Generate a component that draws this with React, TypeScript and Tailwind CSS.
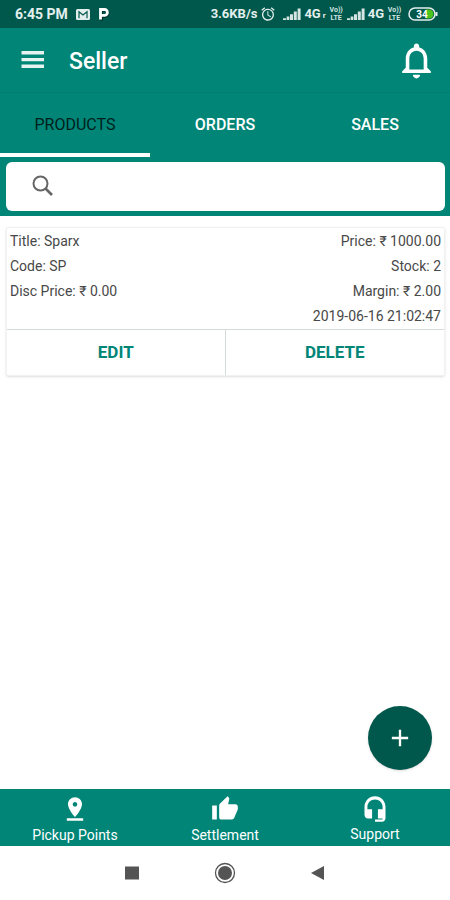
import React, { useState } from 'react';
import { MdAdd, MdAlarm, MdNotificationsNone, MdPinDrop, MdThumbUp } from 'react-icons/md';

interface Product {
  title: string;
  code: string;
  discPrice: string;
  price: string;
  stock: number;
  margin: string;
  createdAt: string;
}

const products: Product[] = [
  {
    title: 'Sparx',
    code: 'SP',
    discPrice: '0.00',
    price: '1000.00',
    stock: 2,
    margin: '2.00',
    createdAt: '2019-06-16 21:02:47',
  },
];

const tabs = ['PRODUCTS', 'ORDERS', 'SALES'];

const links = [
  { label: 'Pickup Points', icon: MdPinDrop, pad: 'pt-[6px]' },
  { label: 'Settlement', icon: MdThumbUp, pad: 'pt-[6px]' },
  { label: 'Support', icon: HeadsetIcon, pad: 'pt-[5px]' },
];

function HeadsetIcon({ className }: { className?: string }) {
  return (
    <svg className={className} viewBox="0 0 24 24" fill="currentColor">
      <path d="M12 2c-4.970 0-9 4.030-9 9v7c0 1.660 1.340 3 3 3h3.500v-8H5.500v-2c0-3.600 2.900-6.300 6.500-6.300s6.500 2.700 6.500 6.300v2h-4v8h4v.8h-6.500v2h6c1.660 0 3-1.340 3-3V11c0-4.970-4.030-9-9-9z" />
    </svg>
  );
}

function SignalBars() {
  return (
    <svg className="h-3 w-[18px] shrink-0" viewBox="0 0 18 12" fill="#d5e5e2">
      <path d="M0 10.200h3V12H0zM3.600 8.500h2.800V12H3.600zM7 6.200h3V12H7zM10.800 3.500h3V12h-3zM14.600 .5h3V12h-3z" />
    </svg>
  );
}

function VoLte() {
  return (
    <span className="flex w-[15px] shrink-0 flex-col items-center text-[7px] leading-2 text-[#d5e5e2]">
      <span>Vo))</span>
      <span>LTE</span>
    </span>
  );
}

function StatusBar() {
  return (
    <div className="flex h-7 items-center justify-between bg-[#00574b] pr-3 pl-[15px] text-[13px] font-bold text-[#e3efed]">
      <div className="flex items-center gap-2">
        <span className="text-sm">6:45 PM</span>
        <svg className="h-[11px] w-[14px]" viewBox="0 0 14 11">
          <rect width="14" height="11" rx="1.500" fill="#e3efed" />
          <path d="M3 9.200V2.800l4 3.200 4-3.200v6.400" fill="none" stroke="#00574b" strokeWidth="1.200" />
        </svg>
        <svg className="h-[14px] w-3" viewBox="0 0 12 14" fill="none">
          <path d="M3.500 13.500V3.500h3.500a2.700 2.700 0 0 1 0 5.800H3.500" stroke="#00352e" strokeWidth="3" />
          <path d="M2.500 12.500V2.500h4a2.600 2.600 0 0 1 0 5.800h-4" stroke="#fff" strokeWidth="2.800" />
        </svg>
      </div>
      <div className="flex items-center gap-[3px]">
        <span>3.6KB/s</span>
        <MdAlarm className="mr-1 size-4" />
        <SignalBars />
        <span className="flex items-baseline gap-[2px]">4G<span className="text-[8px]">r</span></span>
        <VoLte />
        <SignalBars />
        <span>4G</span>
        <VoLte />
        <svg className="ml-[3px] h-[14px] w-[30px]" viewBox="0 0 30 14">
          <rect x="1" y="1" width="26" height="12" rx="6" fill="#00574b" stroke="#e3efed" strokeWidth="1.500" />
          <path d="M18 2.500h3a4.500 4.500 0 0 1 0 9h-3z" fill="#4fc31d" />
          <path d="M28.500 5v4" stroke="#e3efed" strokeWidth="2" />
          <text x="14" y="10.500" textAnchor="middle" fontSize="10" fill="#fff">34</text>
        </svg>
      </div>
    </div>
  );
}

function ProductCard({ product }: { product: Product }) {
  return (
    <article className="rounded-xs border border-[#f1f1f1] bg-white shadow-sm">
      <div className="flex justify-between px-[3px] pt-px text-sm leading-[25px] text-[#484848]">
        <div>
          <p>Title: {product.title}</p>
          <p>Code: {product.code}</p>
          <p>Disc Price: ₹ {product.discPrice}</p>
        </div>
        <div className="text-right">
          <p>Price: ₹ {product.price}</p>
          <p>Stock: {product.stock}</p>
          <p>Margin: ₹ {product.margin}</p>
          <p>{product.createdAt}</p>
        </div>
      </div>
      <div className="grid grid-cols-2 divide-x divide-[#d3dad9] border-t border-[#d3dad9] text-[17px] font-bold text-[#008577]">
        <button className="h-[45px]">EDIT</button>
        <button className="h-[45px]">DELETE</button>
      </div>
    </article>
  );
}

export default function App() {
  const [activeTab, setActiveTab] = useState('PRODUCTS');

  return (
    <div className="flex min-h-screen flex-col bg-white font-[Roboto,'Noto_Sans',sans-serif]">
      <StatusBar />

      {/* Header */}
      <header className="bg-[#008577] text-white">
        <div className="flex h-[65px] items-center border-b border-[#007b6d] pr-3 pl-[18px]">
          <button aria-label="Menu">
            <svg className="size-[30px]" viewBox="0 0 30 30" fill="#e6f3f1">
              <path d="M3.500 6H26v3.500H3.500zM3.500 13H26v3.300H3.500zM3.500 19.500H26V23H3.500z" />
            </svg>
          </button>
          <h1 className="ml-[21px] flex-1 pt-1 text-[23px] font-medium">Seller</h1>
          <button aria-label="Notifications">
            <MdNotificationsNone className="size-[43px]" />
          </button>
        </div>

        <nav className="grid grid-cols-3">
          {tabs.map((tab) => (
            <button
              key={tab}
              onClick={() => setActiveTab(tab)}
              className={`h-16 border-b-4 pt-1 text-base ${
                tab === activeTab ? 'border-white text-[#001f1b]' : 'border-transparent font-medium'
              }`}
            >
              {tab}
            </button>
          ))}
        </nav>

        <div className="py-[5px] pr-[5px] pl-[6px]">
          <label className="flex h-[49px] items-center rounded-md bg-white pl-[22px] text-[#666]">
            <svg className="size-7" viewBox="0 0 28 28" fill="none" stroke="currentColor">
              <circle cx="12.500" cy="10.500" r="7" strokeWidth="2" />
              <path d="m17.500 15.500 6.500 6.500" strokeWidth="2.600" />
            </svg>
            <input type="search" aria-label="Search products" className="min-w-0 flex-1 px-3 text-base outline-none" />
          </label>
        </div>
      </header>

      {/* Products */}
      <main className="relative flex-1 pt-[11px] pr-[5px] pl-[6px]">
        {products.map((product) => (
          <ProductCard key={product.code} product={product} />
        ))}
        <button
          aria-label="Add product"
          className="absolute right-[18px] bottom-[19px] flex size-16 items-center justify-center rounded-full bg-[#00574b] text-white shadow-sm"
        >
          <MdAdd className="size-7" />
        </button>
      </main>

      {/* Bottom links */}
      <nav className="grid h-[57px] grid-cols-3 bg-[#008577] text-white">
        {links.map(({ label, icon: Icon, pad }) => (
          <a key={label} href="#" className={`flex flex-col items-center text-sm leading-6 ${pad}`}>
            <Icon className="size-7" />
            {label}
          </a>
        ))}
      </nav>

      {/* System keys */}
      <div className="flex h-[54px] items-center justify-center gap-[71px] text-[#545454]">
        <button aria-label="Recent apps">
          <svg className="size-[22px]" viewBox="0 0 22 22" fill="currentColor">
            <path d="M4 4.500h14v13H4z" />
          </svg>
        </button>
        <button aria-label="Home">
          <svg className="size-[22px]" viewBox="0 0 22 22" fill="currentColor">
            <circle cx="11" cy="11" r="9.500" fill="none" stroke="currentColor" strokeWidth="1.300" />
            <circle cx="11" cy="11" r="7" />
          </svg>
        </button>
        <button aria-label="Back">
          <svg className="size-[22px]" viewBox="0 0 22 22" fill="currentColor">
            <path d="M4 11 17 4v14z" />
          </svg>
        </button>
      </div>
    </div>
  );
}
